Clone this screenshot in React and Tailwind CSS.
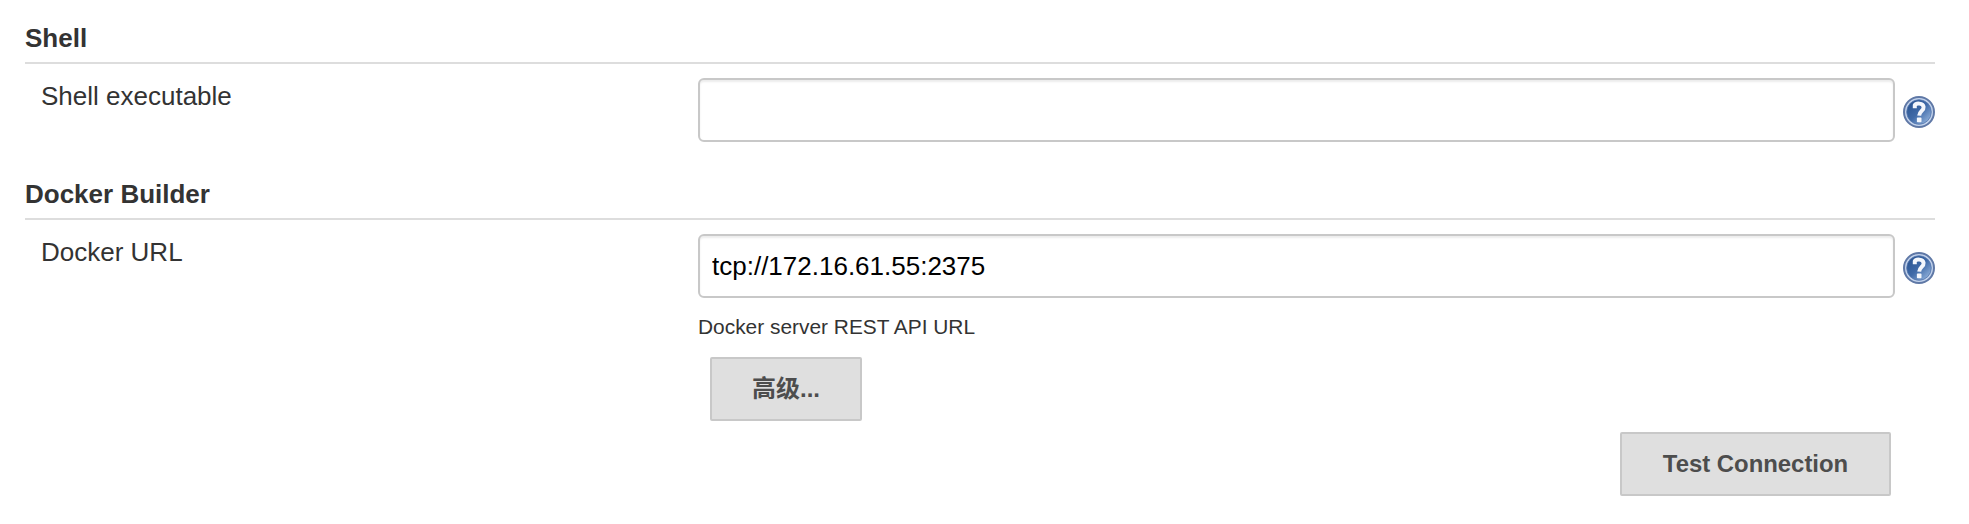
import React from "react";

function HelpIcon({ id }) {
  return (
    <svg className="size-8 shrink-0" viewBox="0 0 32 32" role="img" aria-label="Help">
      <defs>
        <linearGradient id={id} x1="0.1" y1="0.1" x2="0.9" y2="0.9">
          <stop offset="0" stopColor="#2b5592" />
          <stop offset="0.5" stopColor="#3f6aa8" />
          <stop offset="1" stopColor="#8fb0da" />
        </linearGradient>
      </defs>
      <circle cx="16" cy="16" r="15" fill="#c3d3ec" stroke="#5f78a6" strokeWidth="2" />
      <circle cx="16" cy="16" r="12.3" fill={`url(#${id})`} stroke="#5577ae" strokeWidth="0.8" />
      <path d="M11.8 12.2V9.2C13 6.9 20.1 6.7 20.6 11C21 14.7 16.3 15 16.2 19.6" fill="none" stroke="#f4f7fc" strokeWidth="4" />
      <rect x="13.9" y="21.6" width="4.6" height="4.6" rx="0.8" fill="#f4f7fc" />
    </svg>
  );
}

function Section({ title, label, value, helpId, children }) {
  return (
    <section>
      <h2 className="h-[46px] border-b-2 border-[#dddddd] pt-[5px] text-[26px] leading-[30px] font-bold">{title}</h2>
      <div className="flex pt-[14px]">
        <label htmlFor={helpId + "-field"} className="w-[673px] shrink-0 pt-[3px] pl-4 text-[26px] leading-[30px]">{label}</label>
        <div className="min-w-0 flex-1">
          <div className="flex items-center gap-2">
            <input
              id={helpId + "-field"}
              defaultValue={value}
              className="h-16 min-w-0 flex-1 rounded-[6px] border-2 border-[#c8c8c8] bg-white px-3 text-[26px] text-black shadow-[inset_0_2px_2px_rgba(0,0,0,0.075)] outline-none"
            />
            <div className="pt-[4px]"><HelpIcon id={helpId} /></div>
          </div>
          {children}
        </div>
      </div>
    </section>
  );
}

function Button({ children, className }) {
  return (
    <button className={"h-16 rounded-[2px] border-2 border-[#c8c8c8] bg-[#dfdfdf] font-bold text-[#4d4d4d] " + className}>
      {children}
    </button>
  );
}

export default function App() {
  return (
    <main className="flex h-[524px] w-[1969px] flex-col gap-[32px] overflow-hidden bg-white pt-[18px] pr-[34px] pl-[25px] font-['Liberation_Sans','Noto_Sans_CJK_SC',sans-serif] text-[#333333]">
      <Section title="Shell" label="Shell executable" value="" helpId="shell-help" />
      <Section title="Docker Builder" label="Docker URL" value="tcp://172.16.61.55:2375" helpId="docker-help">
        <p className="pt-[16px] text-[20.9px] leading-[26px]">Docker server REST API URL</p>
        <Button className="mt-[17px] ml-3 block w-[152px] text-[24px]">高级...</Button>
        <Button className="mt-[11px] mr-[44px] ml-auto block w-[271px] text-[23.9px]">Test Connection</Button>
      </Section>
    </main>
  );
}
